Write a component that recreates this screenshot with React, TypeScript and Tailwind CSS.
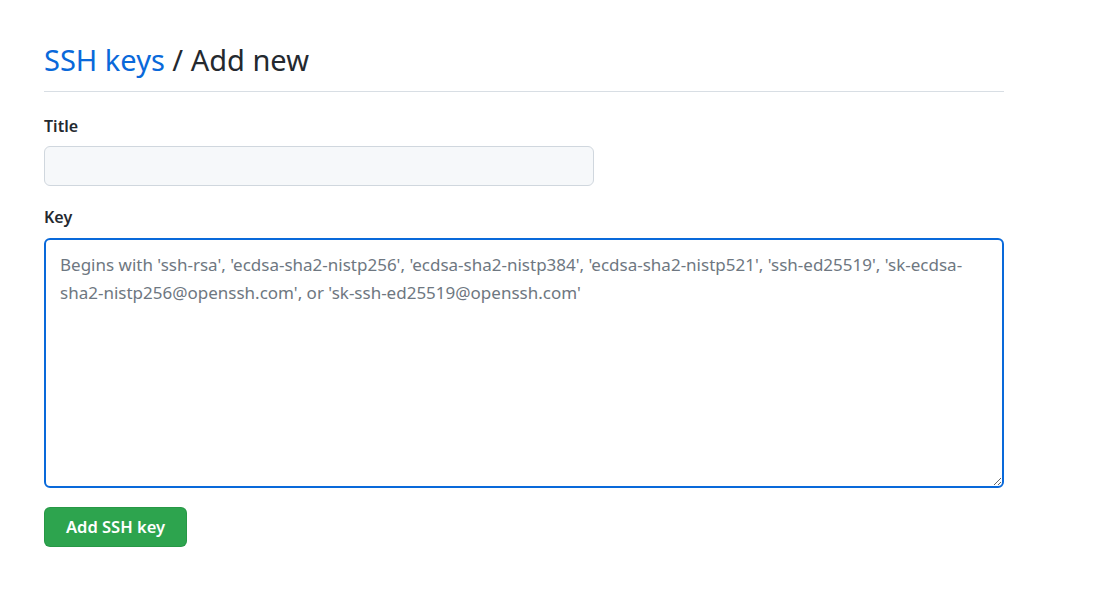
export default function App() {
  return (
    <div className="min-h-screen bg-white font-['Noto_Sans',sans-serif] text-[#24292f]">
      <div className="ml-[44px] w-[960px] pt-[40px]">
        <h2 className="border-b border-[#d8dee4] pb-[11px] text-[29px] leading-[40px] font-normal">
          <a href="#" className="text-[#0969da]">SSH keys</a> / Add new
        </h2>

        <form className="mt-[22px] flex flex-col">
          <label className="text-[16px] leading-[24px] font-semibold">Title</label>
          <input
            type="text"
            className="mt-[8px] h-[40px] w-[550px] rounded-[6px] border border-[#d0d7de] bg-[#f6f8fa] px-[14px] text-[16px] outline-none"
          />

          <label className="mt-[19px] text-[16px] leading-[24px] font-semibold">Key</label>
          <textarea
            className="mt-[9px] h-[250px] w-[960px] rounded-[6px] border-2 border-[#0969da] bg-white px-[14px] py-[11px] text-[17px] leading-[28px] text-[#24292f] outline-none placeholder:text-[#6e7781]"
            placeholder="Begins with 'ssh-rsa', 'ecdsa-sha2-nistp256', 'ecdsa-sha2-nistp384', 'ecdsa-sha2-nistp521', 'ssh-ed25519', 'sk-ecdsa-sha2-nistp256@openssh.com', or 'sk-ssh-ed25519@openssh.com'"
          />

          <div className="mt-[19px]">
            <button
              type="button"
              className="h-[40px] w-[143px] rounded-[6px] border border-[#1f883d]/40 bg-[#2da44e] text-[16.5px] font-semibold text-white"
            >
              Add SSH key
            </button>
          </div>
        </form>
      </div>
    </div>
  );
}
